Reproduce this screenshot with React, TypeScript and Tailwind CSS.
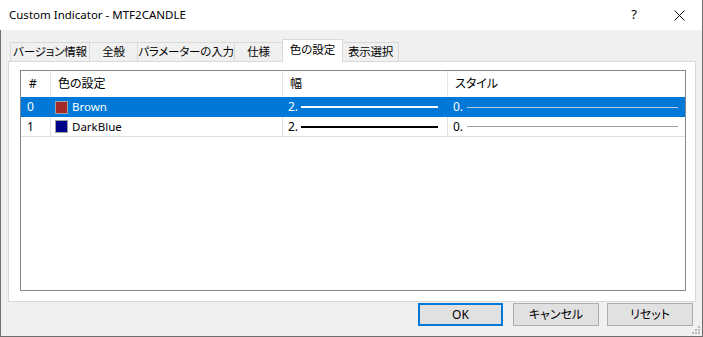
import React from 'react';

type Tab = { label: string; w: string; selected?: boolean; last?: boolean };

const tabs: Tab[] = [
  { label: 'バージョン情報', w: 'w-[79px]' },
  { label: '全般', w: 'w-[48px]' },
  { label: 'パラメーターの入力', w: 'w-[97px]' },
  { label: '仕様', w: 'w-[48px]' },
  { label: '色の設定', w: 'w-[61px]', selected: true },
  { label: '表示選択', w: 'w-[56px]', last: true },
];

type Row = { idx: number; name: string; color: string; selected?: boolean };

const rows: Row[] = [
  { idx: 0, name: 'Brown', color: 'bg-[#a52a2a]', selected: true },
  { idx: 1, name: 'DarkBlue', color: 'bg-[#00008b]' },
];

const Swatch = ({ color }: { color: string }) => (
  <span className={`w-[13px] h-[13px] border border-[#a0a0a0] ${color} shrink-0`} />
);

const App: React.FC = () => {
  return (
    <div className="w-[703px] h-[337px] flex flex-col bg-[#f0f0f0] text-[12px] text-black whitespace-nowrap [font-feature-settings:'palt'] font-['Segoe_UI','Noto_Sans','Noto_Sans_CJK_JP',sans-serif] overflow-hidden">
      {/* title bar */}
      <div className="h-[30px] shrink-0 bg-white flex items-center border-r border-[#6f6f6f]">
        <span className="pl-[9px] text-[11.5px] leading-none">Custom Indicator - MTF2CANDLE</span>
        <div className="ml-auto flex h-full">
          <div className="w-[46px] h-full flex items-center justify-center text-[13px]">?</div>
          <div className="w-[45px] h-full flex items-center justify-center">
            <svg width="11" height="11" viewBox="0 0 11 11">
              <path d="M0.5 0.5 L10.5 10.5 M10.5 0.5 L0.5 10.5" stroke="#111" strokeWidth="1" />
            </svg>
          </div>
        </div>
      </div>

      {/* body */}
      <div className="relative flex-1 flex flex-col border-x border-b border-[#6f6f6f] pl-[7px] pr-[6px] pt-[9px]">
        {/* tabs */}
        <div className="h-[22px] flex items-end pl-[2px] text-[11.5px]">
          {tabs.map((t) =>
            t.selected ? (
              <div
                key={t.label}
                className={`${t.w} h-[23px] -mb-px relative z-10 bg-white border-x border-t border-[#d9d9d9] flex items-center justify-center pb-[3px]`}
              >
                {t.label}
              </div>
            ) : (
              <div
                key={t.label}
                className={`${t.w} h-[19px] border-t border-[#d9d9d9] ${t.last ? 'border-r' : 'border-l'} flex items-center justify-center tracking-[-0.2px]`}
              >
                {t.label}
              </div>
            )
          )}
        </div>

        {/* tab panel */}
        <div className="h-[241px] shrink-0 bg-white border border-[#d9d9d9] pl-[11px] pr-[9px] pt-[8px] pb-[10px] flex">
          <div className="flex-1 border border-[#828790] flex flex-col">
            <div className="h-[26px] flex shrink-0">
              <div className="w-[30px] border-r border-[#e5e5e5] pl-[8px] flex items-center">#</div>
              <div className="w-[232px] border-r border-[#e5e5e5] pl-[7px] flex items-center">色の設定</div>
              <div className="w-[165px] border-r border-[#e5e5e5] pl-[7px] flex items-center">幅</div>
              <div className="flex-1 pl-[7px] flex items-center">スタイル</div>
            </div>
            {rows.map((r) => (
              <div
                key={r.idx}
                className={`h-[20px] flex shrink-0 ${r.selected ? 'bg-[#0078d7] text-white' : 'border-b border-[#e0e0e0]'}`}
              >
                <div className={`w-[30px] pl-[6px] flex items-center border-r ${r.selected ? 'border-[#0078d7]' : 'border-[#e0e0e0]'}`}>
                  {r.idx}
                </div>
                <div className={`w-[232px] pl-[4px] flex items-center gap-[4px] border-r ${r.selected ? 'border-[#0078d7]' : 'border-[#e0e0e0]'}`}>
                  <Swatch color={r.color} />
                  <span className="text-[11.5px]">{r.name}</span>
                </div>
                <div className={`w-[165px] pl-[5px] pr-[9px] flex items-center gap-[3px] border-r ${r.selected ? 'border-[#0078d7]' : 'border-[#e0e0e0]'}`}>
                  <span>2.</span>
                  <span className={`flex-1 h-[2px] ${r.selected ? 'bg-white' : 'bg-black'}`} />
                </div>
                <div className="flex-1 pl-[5px] pr-[7px] flex items-center gap-[4px]">
                  <span>0.</span>
                  <span className={`flex-1 h-px ${r.selected ? 'bg-[#b8c8de]' : 'bg-[#a0a0a0]'}`} />
                </div>
              </div>
            ))}
          </div>
        </div>

        {/* buttons */}
        <div className="mt-[1px] h-[23px] flex justify-end pr-[3px]">
          <button className="w-[85px] h-[23px] bg-[#e1e1e1] border-2 border-[#0078d7] text-[12px]">OK</button>
          <button className="w-[86px] h-[23px] ml-[10px] bg-[#e1e1e1] border border-[#adadad] text-[12px]">キャンセル</button>
          <button className="w-[86px] h-[23px] ml-[8px] bg-[#e1e1e1] border border-[#adadad] text-[12px]">リセット</button>
        </div>

        {/* resize grip */}
        <svg className="absolute right-[1px] bottom-[1px]" width="9" height="9" viewBox="0 0 9 9">
          <rect x="6" y="0" width="2" height="2" fill="#b8b8b8" />
          <rect x="3" y="3" width="2" height="2" fill="#b8b8b8" />
          <rect x="6" y="3" width="2" height="2" fill="#b8b8b8" />
          <rect x="0" y="6" width="2" height="2" fill="#b8b8b8" />
          <rect x="3" y="6" width="2" height="2" fill="#b8b8b8" />
          <rect x="6" y="6" width="2" height="2" fill="#b8b8b8" />
        </svg>
      </div>
    </div>
  );
};

export default App;
